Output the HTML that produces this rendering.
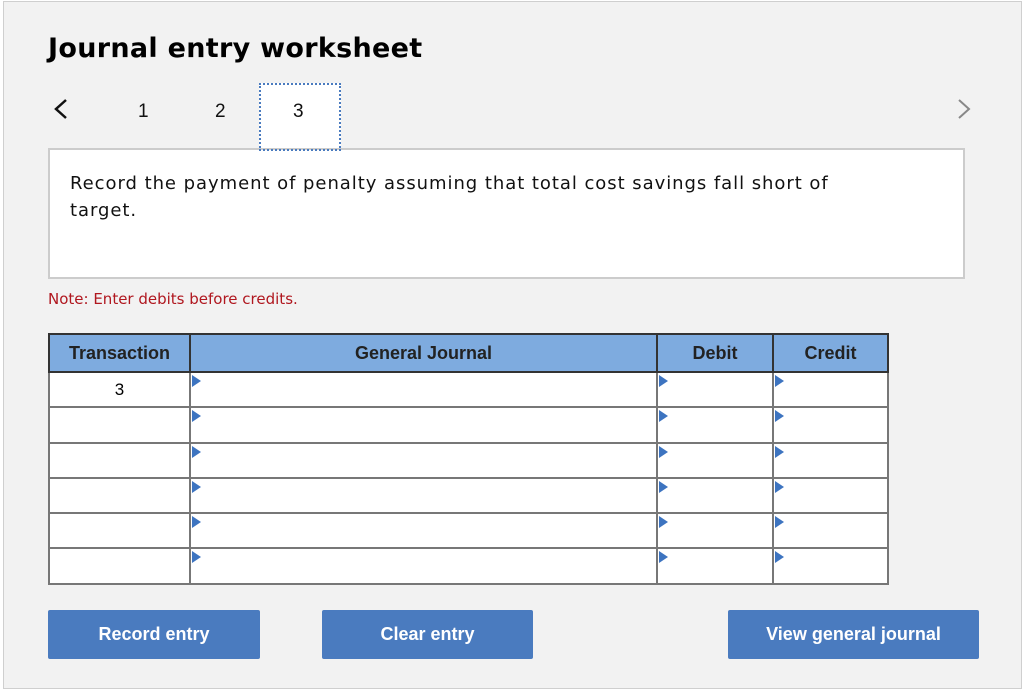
<!DOCTYPE html><html><head><style>
body{margin:0;width:1024px;height:691px;background:#fff;font-family:"Liberation Sans",sans-serif;position:relative;overflow:hidden}
.frame{position:absolute;left:3px;top:1px;width:1019px;height:688px;background:#f2f2f2;border:1px solid #cfcfcf;box-sizing:border-box}
.a{position:absolute}
h1{position:absolute;left:48px;top:33px;margin:0;font-family:"DejaVu Sans",sans-serif;font-weight:bold;font-size:27px;color:#000;letter-spacing:0.3px}
.num{font-size:19px;color:#111}
.btn{position:absolute;top:610px;height:49px;background:#4a7bbf;color:#fff;font-weight:bold;font-size:18px;display:flex;align-items:center;justify-content:center;border-radius:2px}
table{position:absolute;left:48px;top:333px;border-collapse:collapse;font-size:17px}
td,th{border:2px solid #777;padding:0;height:33.3px}
th{background:#7eabdf;border-color:#333;height:36px;font-weight:bold;color:#222;font-size:18px}
td{background:#fff;position:relative}
.t::before{content:"";position:absolute;left:1px;top:2px;border-left:9px solid #3d74c0;border-top:6px solid transparent;border-bottom:6px solid transparent}
</style></head><body>
<div class="frame"></div>
<h1>Journal entry worksheet</h1>
<svg class="a" style="left:52px;top:97px" width="18" height="26"><path d="M14 3 L4 12 L14 21" stroke="#111" stroke-width="2.5" fill="none"/></svg>
<div class="a num" style="left:138px;top:101px">1</div>
<div class="a num" style="left:215px;top:101px">2</div>
<div class="a" style="left:259px;top:83px;width:82px;height:68px;background:#fff;border:2px dotted #4a7bbf;box-sizing:border-box"></div>
<div class="a num" style="left:293px;top:101px">3</div>
<svg class="a" style="left:955px;top:97px" width="18" height="26"><path d="M4 3 L14 12 L4 21" stroke="#888" stroke-width="2" fill="none"/></svg>
<div class="a" style="left:48px;top:148px;width:917px;height:131px;background:#fff;border:2px solid #ccc;box-sizing:border-box"></div>
<div class="a" style="left:259px;top:148px;width:82px;height:3px;border-bottom:2px dotted #4a7bbf;box-sizing:border-box"></div>
<div class="a" style="left:70px;top:170px;width:850px;font-family:'DejaVu Sans',sans-serif;font-size:18px;line-height:27px;color:#111;letter-spacing:0.95px">Record the payment of penalty assuming that total cost savings fall short of<br>target.</div>
<div class="a" style="left:48px;top:290px;font-family:'DejaVu Sans',sans-serif;font-size:15px;color:#b0171f">Note: Enter debits before credits.</div>
<table>
<tr><th style="width:139px">Transaction</th><th style="width:465px">General Journal</th><th style="width:114px">Debit</th><th style="width:113px">Credit</th></tr>
<tr><td style="text-align:center">3</td><td class="t"></td><td class="t"></td><td class="t"></td></tr>
<tr><td></td><td class="t"></td><td class="t"></td><td class="t"></td></tr>
<tr><td></td><td class="t"></td><td class="t"></td><td class="t"></td></tr>
<tr><td></td><td class="t"></td><td class="t"></td><td class="t"></td></tr>
<tr><td></td><td class="t"></td><td class="t"></td><td class="t"></td></tr>
<tr><td></td><td class="t"></td><td class="t"></td><td class="t"></td></tr>
</table>
<div class="btn" style="left:48px;width:212px">Record entry</div>
<div class="btn" style="left:322px;width:211px">Clear entry</div>
<div class="btn" style="left:728px;width:251px">View general journal</div>
</body></html>
